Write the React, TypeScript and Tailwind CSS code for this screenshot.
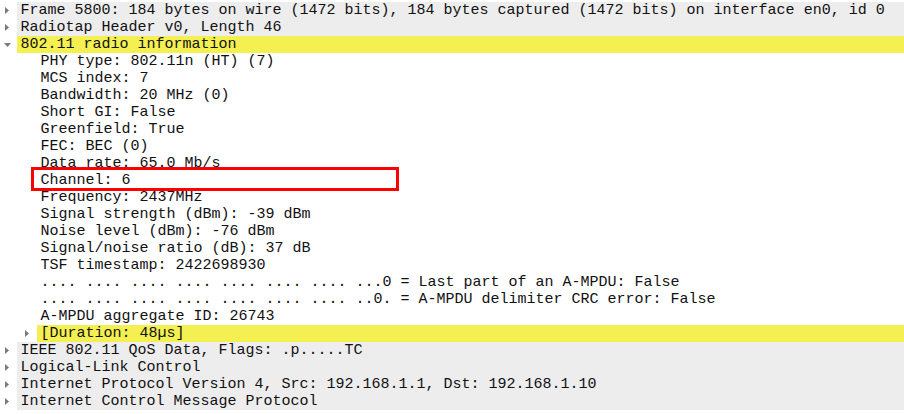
type Row = {
  text: string
  depth: number
  arrow?: "right" | "down"
  bg?: "gray" | "yellow"
}

const rows: Row[] = [
  { text: "Frame 5800: 184 bytes on wire (1472 bits), 184 bytes captured (1472 bits) on interface en0, id 0", depth: 0, arrow: "right", bg: "gray" },
  { text: "Radiotap Header v0, Length 46", depth: 0, arrow: "right", bg: "gray" },
  { text: "802.11 radio information", depth: 0, arrow: "down", bg: "yellow" },
  { text: "PHY type: 802.11n (HT) (7)", depth: 1 },
  { text: "MCS index: 7", depth: 1 },
  { text: "Bandwidth: 20 MHz (0)", depth: 1 },
  { text: "Short GI: False", depth: 1 },
  { text: "Greenfield: True", depth: 1 },
  { text: "FEC: BEC (0)", depth: 1 },
  { text: "Data rate: 65.0 Mb/s", depth: 1 },
  { text: "Channel: 6", depth: 1 },
  { text: "Frequency: 2437MHz", depth: 1 },
  { text: "Signal strength (dBm): -39 dBm", depth: 1 },
  { text: "Noise level (dBm): -76 dBm", depth: 1 },
  { text: "Signal/noise ratio (dB): 37 dB", depth: 1 },
  { text: "TSF timestamp: 2422698930", depth: 1 },
  { text: ".... .... .... .... .... .... .... ...0 = Last part of an A-MPDU: False", depth: 1 },
  { text: ".... .... .... .... .... .... .... ..0. = A-MPDU delimiter CRC error: False", depth: 1 },
  { text: "A-MPDU aggregate ID: 26743", depth: 1 },
  { text: "[Duration: 48µs]", depth: 1, arrow: "right", bg: "yellow" },
  { text: "IEEE 802.11 QoS Data, Flags: .p.....TC", depth: 0, arrow: "right", bg: "gray" },
  { text: "Logical-Link Control", depth: 0, arrow: "right", bg: "gray" },
  { text: "Internet Protocol Version 4, Src: 192.168.1.1, Dst: 192.168.1.10", depth: 0, arrow: "right", bg: "gray" },
  { text: "Internet Control Message Protocol", depth: 0, arrow: "right", bg: "gray" },
]

function Arrow({ dir }: { dir: "right" | "down" }) {
  return dir === "right" ? (
    <svg width="17" height="17" viewBox="0 0 17 17">
      <path d="M5 5 L9 8.5 L5 12 Z" fill="#7a7a7a" />
    </svg>
  ) : (
    <svg width="17" height="17" viewBox="0 0 17 17">
      <path d="M4 7 L11 7 L7.5 11 Z" fill="#7a7a7a" />
    </svg>
  )
}

export default function App() {
  return (
    <div className="relative w-[904px] h-[414px] bg-white pt-[2px] overflow-hidden font-['Liberation_Mono',monospace] text-[15px] leading-[17px] text-[#111]">
      {rows.map((r, i) => (
        <div key={i} className={`flex h-[17px] ${r.depth === 1 ? "pl-[20px]" : ""}`}>
          <div className="w-[17px] h-[17px] shrink-0">
            {r.arrow && <Arrow dir={r.arrow} />}
          </div>
          <div
            className={`flex-1 pl-[3.5px] whitespace-pre ${
              r.bg === "gray" ? "bg-[#ededed]" : r.bg === "yellow" ? "bg-[#f4f052]" : ""
            }`}
          >
            {r.text}
          </div>
        </div>
      ))}
      {/* highlight box drawn over the Channel row */}
      <div className="absolute left-[31px] top-[167px] w-[368px] h-[24px] border-[3px] border-[#ff0000]"></div>
    </div>
  )
}
